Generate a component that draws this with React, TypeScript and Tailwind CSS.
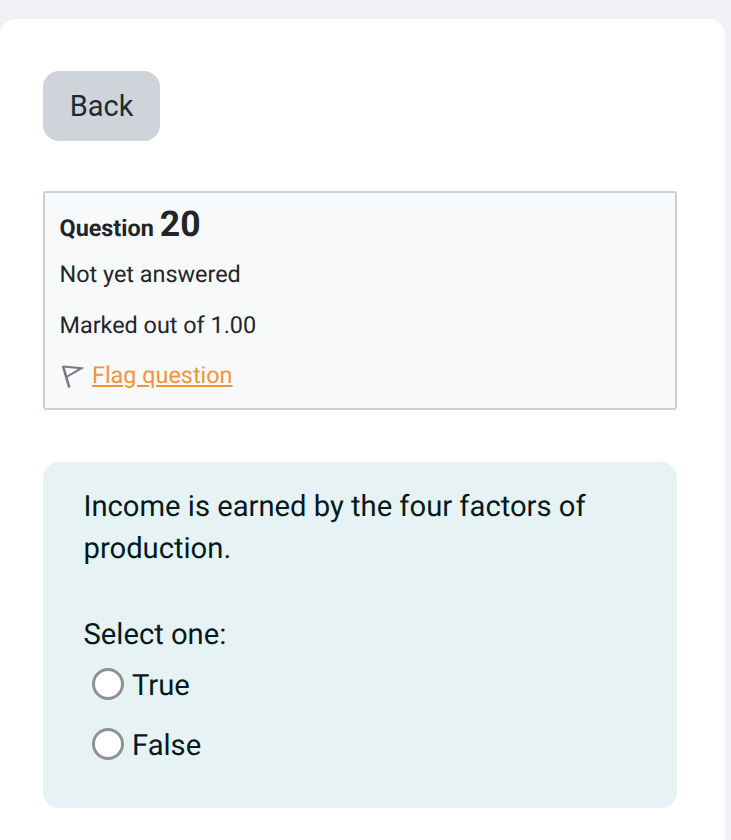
import React from 'react';

const FlagIcon = () => (
  <svg width="24" height="28" viewBox="0 0 24 28" fill="none" className="shrink-0">
    <path d="M3 5 L9.3 26.5" stroke="#77797c" strokeWidth="2.6" />
    <path d="M3.2 5.6 L21.5 7.2 L6.4 16" stroke="#77797c" strokeWidth="2" />
  </svg>
);

const RadioRow = ({ label }: { label: string }) => (
  <label className="flex items-center h-[60px] pl-[8.5px]">
    <span className="w-[32px] h-[32px] -mt-[4px] rounded-full bg-white border-[3px] border-[#8f9193] shrink-0" />
    <span className="ml-[8px]">{label}</span>
  </label>
);

export default function App() {
  return (
    <div className="min-h-[840px] bg-[#f0f2f5] pt-[19px] overflow-hidden font-['Roboto',sans-serif] [text-rendering:geometricPrecision]">
      <div className="w-[725px] h-[821px] bg-white rounded-t-[16px] pt-[52px] pl-[43px] pr-[48px]">
        <button className="w-[117px] h-[70px] rounded-[16px] bg-[#cfd4db] text-[#1f2937] text-[29px] leading-none">
          Back
        </button>

        <div className="mt-[50px] h-[219px] border-2 border-[#c9d1d6] rounded-[3px] bg-[#f8f9fb] pl-[14.5px] pt-[10px] text-[#212529]">
          <h3 className="flex items-baseline font-bold text-[23.4px] leading-[42px] h-[42px]">
            Question
            <span className="ml-[6px] text-[35.5px]">20</span>
          </h3>
          <div className="text-[23.4px] leading-[34px] mt-[12px]">Not yet answered</div>
          <div className="text-[23.4px] leading-[34px] mt-[17px]">Marked out of 1.00</div>
          <div className="flex items-center text-[23.4px] leading-[34px] mt-[16px]">
            <FlagIcon />
            <a href="#" className="ml-[8.5px] text-[#f0953a] underline">Flag question</a>
          </div>
        </div>

        <div className="mt-[52px] h-[346px] rounded-[16px] bg-[#e6f2f4] pt-[24px] pl-[40.5px] pr-[40px] text-[#001a1e] text-[29.2px] leading-[42px]">
          <p>Income is earned by the four factors of production.</p>
          <p className="mt-[44px]">Select one:</p>
          <div>
            <RadioRow label="True" />
            <RadioRow label="False" />
          </div>
        </div>
      </div>
    </div>
  );
}
